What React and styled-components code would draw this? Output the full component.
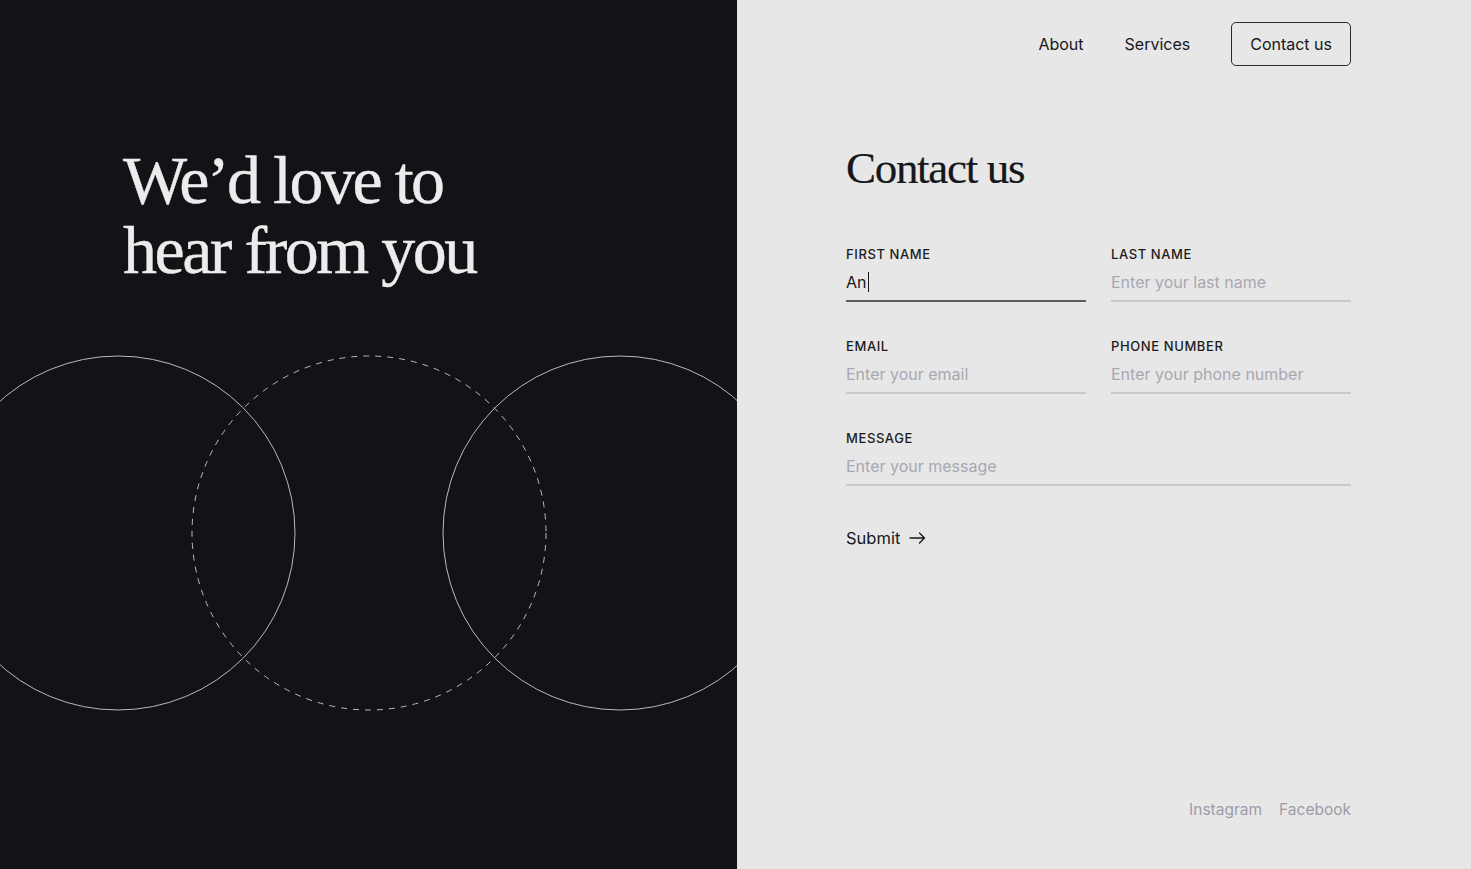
import React from "react";
import styled, { createGlobalStyle } from "styled-components";

const Global = createGlobalStyle`
  html, body { margin: 0; padding: 0; }
  body { font-family: Inter, "Noto Sans", sans-serif; }
  * { box-sizing: border-box; }
`;

const Page = styled.div`
  display: flex;
  width: 100%;
  height: 869px;
  overflow: hidden;
`;

const Dark = styled.section`
  width: 737px;
  flex: none;
  background: #121317;
  display: flex;
  flex-direction: column;
  overflow: hidden;
`;

const Headline = styled.h1`
  margin: 145px 0 0 123px;
  font-family: "Liberation Serif", "Times New Roman", serif;
  font-weight: 400;
  font-size: 68px;
  line-height: 70px;
  letter-spacing: -2.5px;
  color: #ececec;
  -webkit-text-stroke: 0.4px #ececec;
`;

const Rings = styled.svg`
  display: block;
  margin-top: 63px;
  flex: none;
`;

const Light = styled.section`
  flex: 1;
  background: #e7e7e7;
  display: flex;
  flex-direction: column;
  padding: 22px 120px 47px 109px;
  color: #16171b;
`;

const Nav = styled.nav`
  display: flex;
  justify-content: flex-end;
  align-items: center;
  gap: 41px;
`;

const NavLink = styled.a`
  font-size: 16px;
  color: #16171b;
  text-decoration: none;
`;

const NavButton = styled.a`
  display: flex;
  align-items: center;
  height: 44px;
  padding: 0 18px 0 18px;
  border: 1px solid #2a2b2f;
  border-radius: 5px;
  font-size: 16px;
  color: #16171b;
  text-decoration: none;
`;

const Title = styled.h2`
  margin: 80px 0 0;
  font-family: "Liberation Serif", "Times New Roman", serif;
  font-weight: 400;
  font-size: 45px;
  line-height: 44px;
  letter-spacing: -1.3px;
  color: #16171b;
  -webkit-text-stroke: 0.2px #16171b;
`;

const Form = styled.form`
  margin-top: 56px;
  display: grid;
  grid-template-columns: 240px 240px;
  column-gap: 25px;
  row-gap: 36px;
  width: 505px;
`;

const Field = styled.label`
  display: flex;
  flex-direction: column;
  grid-column: ${(p) => (p.$wide ? "1 / -1" : "auto")};
`;

const Label = styled.span`
  font-size: 13px;
  line-height: 16px;
  font-weight: 500;
  letter-spacing: 0.6px;
  color: #1b1c20;
  margin-bottom: 8px;
`;

const Input = styled.input`
  appearance: none;
  background: transparent;
  border: none;
  border-bottom: 2px solid ${(p) => (p.$active ? "#5c5d62" : "#c9c9cf")};
  height: 32px;
  padding: 0 0 6px;
  font-family: Inter, "Noto Sans", sans-serif;
  font-size: 16px;
  line-height: 24px;
  color: #16171b;
  outline: none;
  &::placeholder { color: #a8a8b2; }
`;

const Filled = styled.div`
  display: flex;
  align-items: center;
  border-bottom: 2px solid #5c5d62;
  height: 32px;
  padding: 0 0 6px;
  font-size: 16px;
  line-height: 24px;
  color: #16171b;
`;

const Caret = styled.span`
  display: inline-block;
  width: 1px;
  height: 20px;
  background: #16171b;
  margin-left: 1px;
`;

const Submit = styled.button`
  margin-top: 40px;
  align-self: flex-start;
  display: flex;
  align-items: center;
  gap: 9px;
  padding: 0;
  border: none;
  background: none;
  font-family: Inter, "Noto Sans", sans-serif;
  font-size: 16.5px;
  line-height: 24px;
  color: #16171b;
  cursor: pointer;
`;

const Footer = styled.footer`
  margin-top: auto;
  display: flex;
  justify-content: flex-end;
  gap: 17px;
`;

const Social = styled.a`
  font-size: 15.5px;
  line-height: 24px;
  color: #9c9ca7;
  text-decoration: none;
`;

export default function App() {
  return (
    <>
      <Global />
      <Page>
        <Dark>
          <Headline>
            We’d love to
            <br />
            hear from you
          </Headline>
          <Rings width="737" height="370" viewBox="0 0 737 370">
            <circle cx="118" cy="185" r="177" fill="none" stroke="#b9babd" strokeWidth="1" />
            <circle
              cx="369"
              cy="185"
              r="177"
              fill="none"
              stroke="#b9babd"
              strokeWidth="1"
              strokeDasharray="6 6"
            />
            <circle cx="620" cy="185" r="177" fill="none" stroke="#b9babd" strokeWidth="1" />
          </Rings>
        </Dark>
        <Light>
          <Nav>
            <NavLink href="#">About</NavLink>
            <NavLink href="#">Services</NavLink>
            <NavButton href="#">Contact us</NavButton>
          </Nav>
          <Title>Contact us</Title>
          <Form onSubmit={(e) => e.preventDefault()}>
            <Field>
              <Label>FIRST NAME</Label>
              <Filled>
                An<Caret />
              </Filled>
            </Field>
            <Field>
              <Label>LAST NAME</Label>
              <Input placeholder="Enter your last name" />
            </Field>
            <Field>
              <Label>EMAIL</Label>
              <Input placeholder="Enter your email" />
            </Field>
            <Field>
              <Label>PHONE NUMBER</Label>
              <Input placeholder="Enter your phone number" />
            </Field>
            <Field $wide>
              <Label>MESSAGE</Label>
              <Input placeholder="Enter your message" />
            </Field>
          </Form>
          <Submit type="button">
            Submit
            <svg width="17" height="12" viewBox="0 0 17 12" fill="none">
              <path d="M1 6h14.5M10.5 1l5 5-5 5" stroke="#16171b" strokeWidth="1.3" strokeLinecap="round" strokeLinejoin="round" />
            </svg>
          </Submit>
          <Footer>
            <Social href="#">Instagram</Social>
            <Social href="#">Facebook</Social>
          </Footer>
        </Light>
      </Page>
    </>
  );
}
